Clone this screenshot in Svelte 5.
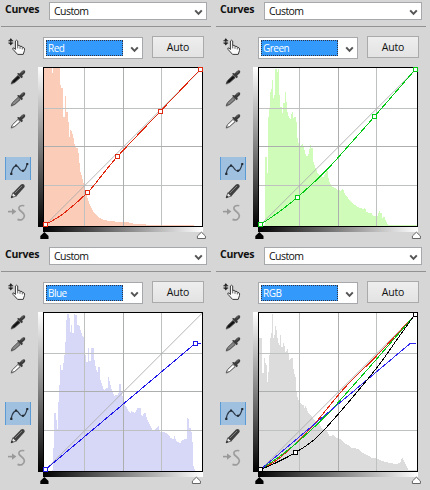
<script>
  const histograms = {
    Red: '132,21 153,21 156,40 160,25 164,55 166,24 176,24 179,60 181,75 184,85 188,110 190,170 194,190 195,108 198,110 199,155 203,185 207,230 211,210 216,215 221,235 223,250 229,265 233,280 236,310 240,330 247,355 253,380 260,405 270,435 280,455 290,467 305,477 330,484 340,484 370,487 380,486 395,490 410,493 575,496 606,498',
    Green: '148,495 149,290 152,290 155,340 158,335 160,170 163,145 165,100 170,85 172,60 175,115 178,105 181,28 185,45 190,27 193,105 196,140 200,160 203,160 205,130 208,130 210,95 214,125 217,155 222,175 226,180 231,155 234,175 238,170 242,185 246,225 252,255 257,258 264,250 270,278 275,290 280,285 286,255 289,265 293,300 300,320 308,340 315,347 325,352 330,340 337,330 342,365 350,378 370,390 378,393 384,386 390,402 400,415 410,428 430,442 445,447 450,443 455,457 470,460 475,469 487,468 493,452 498,460 502,475 508,470 515,488 520,495 606,496',
    Blue: '157,495 158,435 160,430 162,325 166,325 167,345 170,372 173,340 175,290 178,240 180,180 184,195 188,175 192,150 194,110 197,70 199,45 202,28 206,40 209,80 213,60 217,85 221,75 223,27 228,30 231,60 238,62 243,80 248,95 252,125 255,150 259,170 263,140 265,128 268,168 272,180 274,128 281,128 283,165 286,180 291,200 295,185 299,220 305,235 312,258 318,250 322,250 325,215 331,238 337,260 342,272 350,270 353,290 358,238 362,250 368,275 375,300 383,312 390,325 395,318 405,325 412,308 420,310 423,328 428,332 435,320 442,345 450,360 458,378 465,375 475,362 480,380 495,382 505,388 513,400 520,402 523,393 530,408 540,415 548,405 557,402 560,375 562,340 567,342 568,370 572,380 575,410 578,420 580,480 585,496',
    RGB: '132,100 138,100 140,130 142,205 146,160 150,175 153,180 156,230 160,200 163,150 166,100 168,85 171,27 173,27 174,100 177,90 181,62 184,75 187,95 192,120 195,90 199,125 203,115 207,115 212,145 218,130 223,165 230,160 234,185 240,215 243,250 248,280 256,295 262,300 266,312 272,303 280,325 290,335 297,345 310,350 320,370 335,378 345,395 355,390 362,398 375,402 390,415 400,420 410,428 430,432 440,442 450,447 470,458 490,462 500,468 530,475 545,478 555,473 562,458 568,470 575,485 580,495 606,496'
  };
  const red = [[136,494],[190,461],[262,398],[300,353],[352,290],[481,154],[601,28]];
  const redMix = [[136,494],[190,462],[250,408],[300,355],[370,270],[410,226],[485,152],[601,28]];
  const green = [[136,494],[190,457],[247,412],[330,335],[400,258],[478,170],[601,28]];
  const blue = [[136,494],[586,115],[602,115]];
  const black = [[136,494],[190,470],[242,442],[300,402],[370,327],[484,190],[545,105],[600,28]];

  const panels = [
    { name: 'Red', fill: '#fbccb7', curves: [[red, '#e02810']], knots: [[136,494],[262,398],[352,290],[481,154],[601,28]], white: 201 },
    { name: 'Green', fill: '#cffdb9', curves: [[green, '#00c814']], knots: [[136,494],[247,412],[478,170],[601,28]], white: 201 },
    { name: 'Blue', fill: '#d7d7f8', curves: [[blue, '#2018e8']], knots: [[136,494],[586,115]], white: 196 },
    { name: 'RGB', fill: '#dcdcdc', curves: [[redMix, '#e02810'], [green, '#00c814'], [blue, '#3028f0'], [black, '#000']], knots: [[136,494],[242,442],[600,28]], white: 201 }
  ];

  // Catmull-Rom spline; short curves stay as straight segments
  function spline(p) {
    if (p.length < 4) return 'M' + p.map((q) => q.join(' ')).join('L');
    let d = `M${p[0][0]} ${p[0][1]}`;
    for (let i = 0; i < p.length - 1; i++) {
      const a = p[i - 1] ?? p[i], b = p[i], c = p[i + 1], e = p[i + 2] ?? c;
      d += `C${b[0] + (c[0] - a[0]) / 6} ${b[1] + (c[1] - a[1]) / 6} ${c[0] - (e[0] - b[0]) / 6} ${c[1] - (e[1] - b[1]) / 6} ${c[0]} ${c[1]}`;
    }
    return d;
  }

  // Stepped outline, one column per sample
  function steps(name) {
    const p = histograms[name].split(' ').map((s) => s.split(',').map(Number));
    let d = `M${p[0][0]} 498`;
    for (let i = 0; i < p.length; i++) {
      const [x, y] = p[i];
      const n = p[i + 1];
      d += `L${x} ${y}`;
      if (n && n[0] - x < 5) d += `H${n[0]}`;
    }
    return d + `L${p[p.length - 1][0]} 498Z`;
  }
</script>

{#snippet chevron()}
  <svg class="chev" width="9" height="7" viewBox="0 0 9 7"><path d="M1.2 1.4 4.5 4.9 7.8 1.4" fill="none" stroke="#555" stroke-width="2" /></svg>
{/snippet}

{#snippet dropper(liquid)}
  <svg class="dropper" width="18" height="18" viewBox="0 0 18 18">
    <path d="M2 16.6 10.8 9.6" stroke="#999" stroke-width="1.8" opacity=".6" />
    <path d="M2.3 15.6 3.3 12.9 9 7.4 11.2 9.5 5.7 14.5Z" fill={liquid} stroke="#444" stroke-width=".9" />
    <path d="M8 5.8 9.3 4.9 10.5 5.4 13 2.9Q15 1.6 16 2.7 16.8 4 15.5 5.4L13.2 7.6 13.9 8.9 12.6 10.2Z" fill="#3a3a3a" />
    <path d="M12.5 4.8 14.5 3.1" stroke="#888" stroke-width=".8" />
  </svg>
{/snippet}

<main>
  {#each panels as panel}
    <section>
      <header>
        <b>Curves</b>
        <div class="select preset"><span>Custom</span>{@render chevron()}</div>
      </header>
      <div class="controls">
        <svg class="hand" width="20" height="20" viewBox="0 0 20 20">
          <path d="M3.8 1.8V7.4M1.4 3.8H6.2M1.4 6H6.2" fill="none" stroke="#222" stroke-width="1" />
          <path d="M2 3.6 3.8 1.2 5.6 3.6ZM2 6 3.8 8.4 5.6 6Z" fill="#222" />
          <path d="M8.4 12.5V4Q9.5 2.4 10.7 4V8.3L12.4 8.4 13 9.2 15 9.5 15.5 10.3 17 10.8Q18 11.6 17.5 13.5L16.2 17.4H10.6L6 12.4Q5.2 10.7 6.8 10.9Z" fill="#fafafa" stroke="#3a3a3a" stroke-width="1" />
          <path d="M10.7 8V11.4M13 9V11.8M15.3 10.2V12.4" stroke="#555" stroke-width=".9" />
        </svg>
        <div class="select channel"><span class="picked">{panel.name}</span>{@render chevron()}</div>
        <button>Auto</button>
      </div>
      <div class="editor">
        <nav>
          {@render dropper('#111')}
          {@render dropper('#888')}
          {@render dropper('#fff')}
          <div class="tool">
            <svg width="24" height="23" viewBox="0 0 24 23">
              <path d="M5.3 16.5C6.5 10 10 6.5 12.5 10.5S18.5 17 21.2 7" fill="none" stroke="#2c3a48" stroke-width="1.2" />
              <path d="M4.2 15.8h2.2v2.2H4.2zM9 7.6h2v2h-2zM16 12.8h2v2h-2zM20.3 6h2v2h-2z" fill="#222b34" />
            </svg>
          </div>
          <svg class="pencil" width="18" height="18" viewBox="0 0 18 18">
            <path d="M2.2 15.8 3.8 10.8 7.3 14Z" fill="#e8e8e8" stroke="#444" stroke-width=".8" />
            <path d="M1.9 16 2.8 13.4 4.5 15Z" fill="#222" />
            <path d="M4 10.8 12 2.6Q13.8 1.4 15.2 2.8 16.4 4.2 15.2 5.6L7.4 14.2Z" fill="#404040" />
            <path d="M6 11 13 4" stroke="#888" stroke-width=".9" />
          </svg>
          <svg class="smooth" width="20" height="18" viewBox="0 0 20 18">
            <path d="M0 7.6H5" stroke="#999" stroke-width="1.6" />
            <path d="M4 4.4 8.4 7.6 4 10.8Z" fill="#999" />
            <path d="M16.3 1.8C12.5.8 10.4 2.6 11 5 11.6 7.3 16.4 8.3 16.4 11.8 16.2 15.4 13 16.6 9.5 15.4" fill="none" stroke="#9c9c9c" stroke-width="1.7" />
          </svg>
        </nav>
        <div class="vramp"></div>
        <div class="plot">
          <svg class="graph" width="160" height="160" viewBox="129 21 480 480">
            <rect x="129" y="21" width="480" height="480" fill="#fff" />
            <path d={steps(panel.name)} fill={panel.fill} shape-rendering="crispEdges" />
            <g fill="none" stroke-width="3" shape-rendering="crispEdges">
              <path d="M253.5 21V501M484.5 21V501M129 145.5H609M129 376.5H609" stroke="#bfc1c1" />
              <path d="M370.5 21V501M129 259.5H609" stroke="#adafaf" />
            </g>
            <path d="M134 497 606 25" stroke="#aaa" stroke-width="2.6" />
            {#each panel.curves as [points, color]}
              <path d={spline(points)} fill="none" stroke={color} stroke-width="3" shape-rendering="crispEdges" />
            {/each}
            <rect x="130.5" y="22.5" width="477" height="477" fill="none" stroke="#000" stroke-width="3" />
            {#each panel.knots as [x, y]}
              <rect x={Math.floor(x / 3) * 3 - 4.5} y={Math.floor(y / 3) * 3 - 4.5} width="12" height="12" fill="#fff" stroke={panel.curves[panel.curves.length - 1][1]} stroke-width="3" />
            {/each}
          </svg>
          <div class="hramp"></div>
          <svg class="stops" width="172" height="9" viewBox="38 231 172 9">
            <path d="M40.3 239V236L44.4 232 48.5 236V239Z" fill="#000" />
            <path d="M{panel.white - 3.6} 238.5V236L{panel.white + .4} 232.2 {panel.white + 4.4} 236V238.5Z" fill="#fff" stroke="#666" />
          </svg>
        </div>
      </div>
    </section>
  {/each}
</main>

<style>
  main {
    width: 430px;
    height: 490px;
    display: grid;
    grid-template: 245px 245px / 215px 215px;
    background: #d6d6d6;
    font: 10.5px/16px "Open Sans", "Noto Sans", sans-serif;
    color: #111;
    overflow: hidden;
  }
  section { overflow: hidden; }
  svg { display: block; flex: none; }
  header {
    display: flex;
    height: 24px;
    margin: 0 4px 0 1px;
    padding: 2px 3px 0 4px;
    border-bottom: 1px solid #929292;
  }
  b { width: 44px; font-size: 10.5px; line-height: 14px; letter-spacing: -.25px; }
  .select {
    box-sizing: border-box;
    display: flex;
    align-items: center;
    background: #fff;
    border: 1px solid #a6a8ac;
  }
  .preset { width: 158px; height: 18px; padding: 0 3px 0 4px; }
  .preset span { flex: 1; letter-spacing: -.55px; }
  .chev { margin-top: 2px; }
  .controls { display: flex; height: 40px; padding-top: 9px; box-sizing: border-box; }
  .hand { margin: 1px 16px 0 7px; }
  .channel { width: 100px; height: 22px; margin-top: 1px; padding: 0 3px 0 2px; justify-content: space-between; }
  .picked {
    box-sizing: border-box;
    width: 77px;
    height: 16px;
    padding-left: 1px;
    background-color: #3399fb;
    border: 1px dotted #e58b28;
    outline: 1px dotted #334;
    outline-offset: -1px;
    color: #fff;
    font-size: 10px;
    line-height: 15px;
    letter-spacing: -.5px;
  }
  button {
    box-sizing: border-box;
    width: 52px;
    height: 22px;
    margin-left: 9px;
    padding: 0;
    border: 1px solid #aaa;
    background: linear-gradient(#eee, #e3e3e3);
    font: inherit;
    letter-spacing: -.2px;
    color: #111;
  }
  .editor { display: flex; }
  nav { width: 38px; padding-left: 5px; box-sizing: border-box; }
  .dropper { margin: 1px 0 4px 4px; }
  .tool {
    box-sizing: border-box;
    width: 26px;
    height: 23px;
    margin-top: 27px;
    border: solid #5b9bd5;
    border-width: 0 1px;
    background: #a0c0e0;
  }
  .pencil { margin: 2px 0 0 4px; }
  .smooth { margin: 4px 0 0 3px; }
  .vramp { width: 5px; height: 160px; background: linear-gradient(#fff, #000); }
  .hramp { width: 160px; height: 5px; background: linear-gradient(90deg, #000, #fff); }
  .stops { margin: -1px 0 0 -5px; }
</style>
